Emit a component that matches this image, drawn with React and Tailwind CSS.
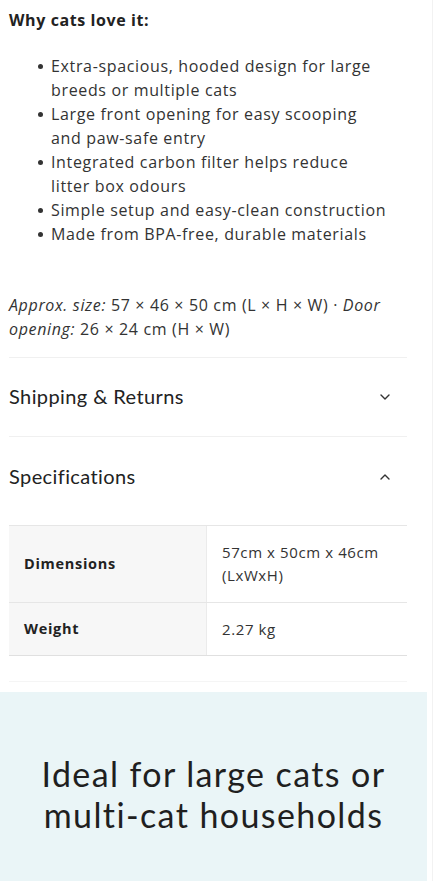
import React from "react";

const body = { fontFamily: '"Open Sans", sans-serif' };
const head = { fontFamily: 'Lato, "Noto Sans", sans-serif' };

function Chevron({ up }) {
  return (
    <svg width="12" height="8" viewBox="0 0 12 8" fill="none" stroke="#333" strokeWidth="1.4" strokeLinecap="round" strokeLinejoin="round">
      {up ? <path d="M2 6 L6 2 L10 6" /> : <path d="M2 2 L6 6 L10 2" />}
    </svg>
  );
}

const items = [
  ["Extra-spacious, hooded design for large", "breeds or multiple cats"],
  ["Large front opening for easy scooping", "and paw-safe entry"],
  ["Integrated carbon filter helps reduce", "litter box odours"],
  ["Simple setup and easy-clean construction"],
  ["Made from BPA-free, durable materials"],
];

export default function App() {
  return (
    <div className="relative w-[440px] h-[881px] bg-white overflow-hidden" style={body}>
      <div className="absolute top-0 bottom-0 left-[432px] w-px bg-[#f2f2f2]" />
      <div className="w-[407px] pl-[9px]">
        <div className="pt-[8px] text-[16px] leading-[24px] font-bold text-[#222] tracking-[0.6px]">Why cats love it:</div>
        <ul className="mt-[22px] flex flex-col text-[16px] leading-[24px] text-[#333] tracking-[0.65px]">
          {items.map((it, i) => (
            <li key={i} className="flex">
              <span className="w-[42px] shrink-0 flex justify-end pr-[8px] pt-[10px]">
                <span className="block w-[5px] h-[5px] rounded-full bg-[#333]" />
              </span>
              <span>
                {it.map((l, j) => (
                  <span key={j} className="block whitespace-nowrap">{l}</span>
                ))}
              </span>
            </li>
          ))}
        </ul>
        <p className="mt-[47px] text-[16px] leading-[24px] text-[#333] tracking-[0.65px]">
          <em>Approx. size:</em> 57 × 46 × 50 cm (L × H × W) · <em>Door opening:</em> 26 × 24 cm (H × W)
        </p>
        <div className="mt-[16px] border-t border-[#f0f0f0]" />
        <div className="h-[79px] flex items-center justify-between pr-[16px] border-b border-[#f0f0f0]">
          <span className="text-[20px] text-[#222] tracking-[0.4px] -mt-[2px]" style={head}>Shipping &amp; Returns</span>
          <Chevron />
        </div>
        <div className="h-[79px] flex items-center justify-between pr-[16px]">
          <span className="text-[20px] text-[#222] tracking-[0.4px] -mt-[2px]" style={head}>Specifications</span>
          <Chevron up />
        </div>
        <div className="mt-[9px] border-t border-[#e6e6e6]">
          <div className="grid grid-cols-[198px_1fr] border-b border-[#e6e6e6]">
            <div className="bg-[#f7f7f7] flex items-center pl-[15px] h-[76px] text-[14.5px] font-bold text-[#222] tracking-[0.7px] border-r border-[#ebebeb]">Dimensions</div>
            <div className="flex flex-col justify-center pl-[15px] text-[15px] leading-[23px] text-[#333] tracking-[0.6px]">
              <span>57cm x 50cm x 46cm</span>
              <span>(LxWxH)</span>
            </div>
          </div>
          <div className="grid grid-cols-[198px_1fr] border-b border-[#e0e0e0]">
            <div className="bg-[#f7f7f7] flex items-center pl-[15px] h-[52px] text-[14.5px] font-bold text-[#222] tracking-[0.7px] border-r border-[#ebebeb]">Weight</div>
            <div className="flex items-center pl-[15px] text-[15px] text-[#333] tracking-[0.6px]">2.27 kg</div>
          </div>
        </div>
        <div className="mt-[25px] border-t border-[#f5f5f5]" />
      </div>
      <div className="mt-[10px] w-[427px] h-[200px] bg-[#eaf5f7] flex items-start justify-center pt-[61px]">
        <h2 className="text-center text-[34px] leading-[41px] text-[#1f1f1f] tracking-[1.4px]" style={head}>
          Ideal for large cats or<br />multi-cat households
        </h2>
      </div>
    </div>
  );
}
